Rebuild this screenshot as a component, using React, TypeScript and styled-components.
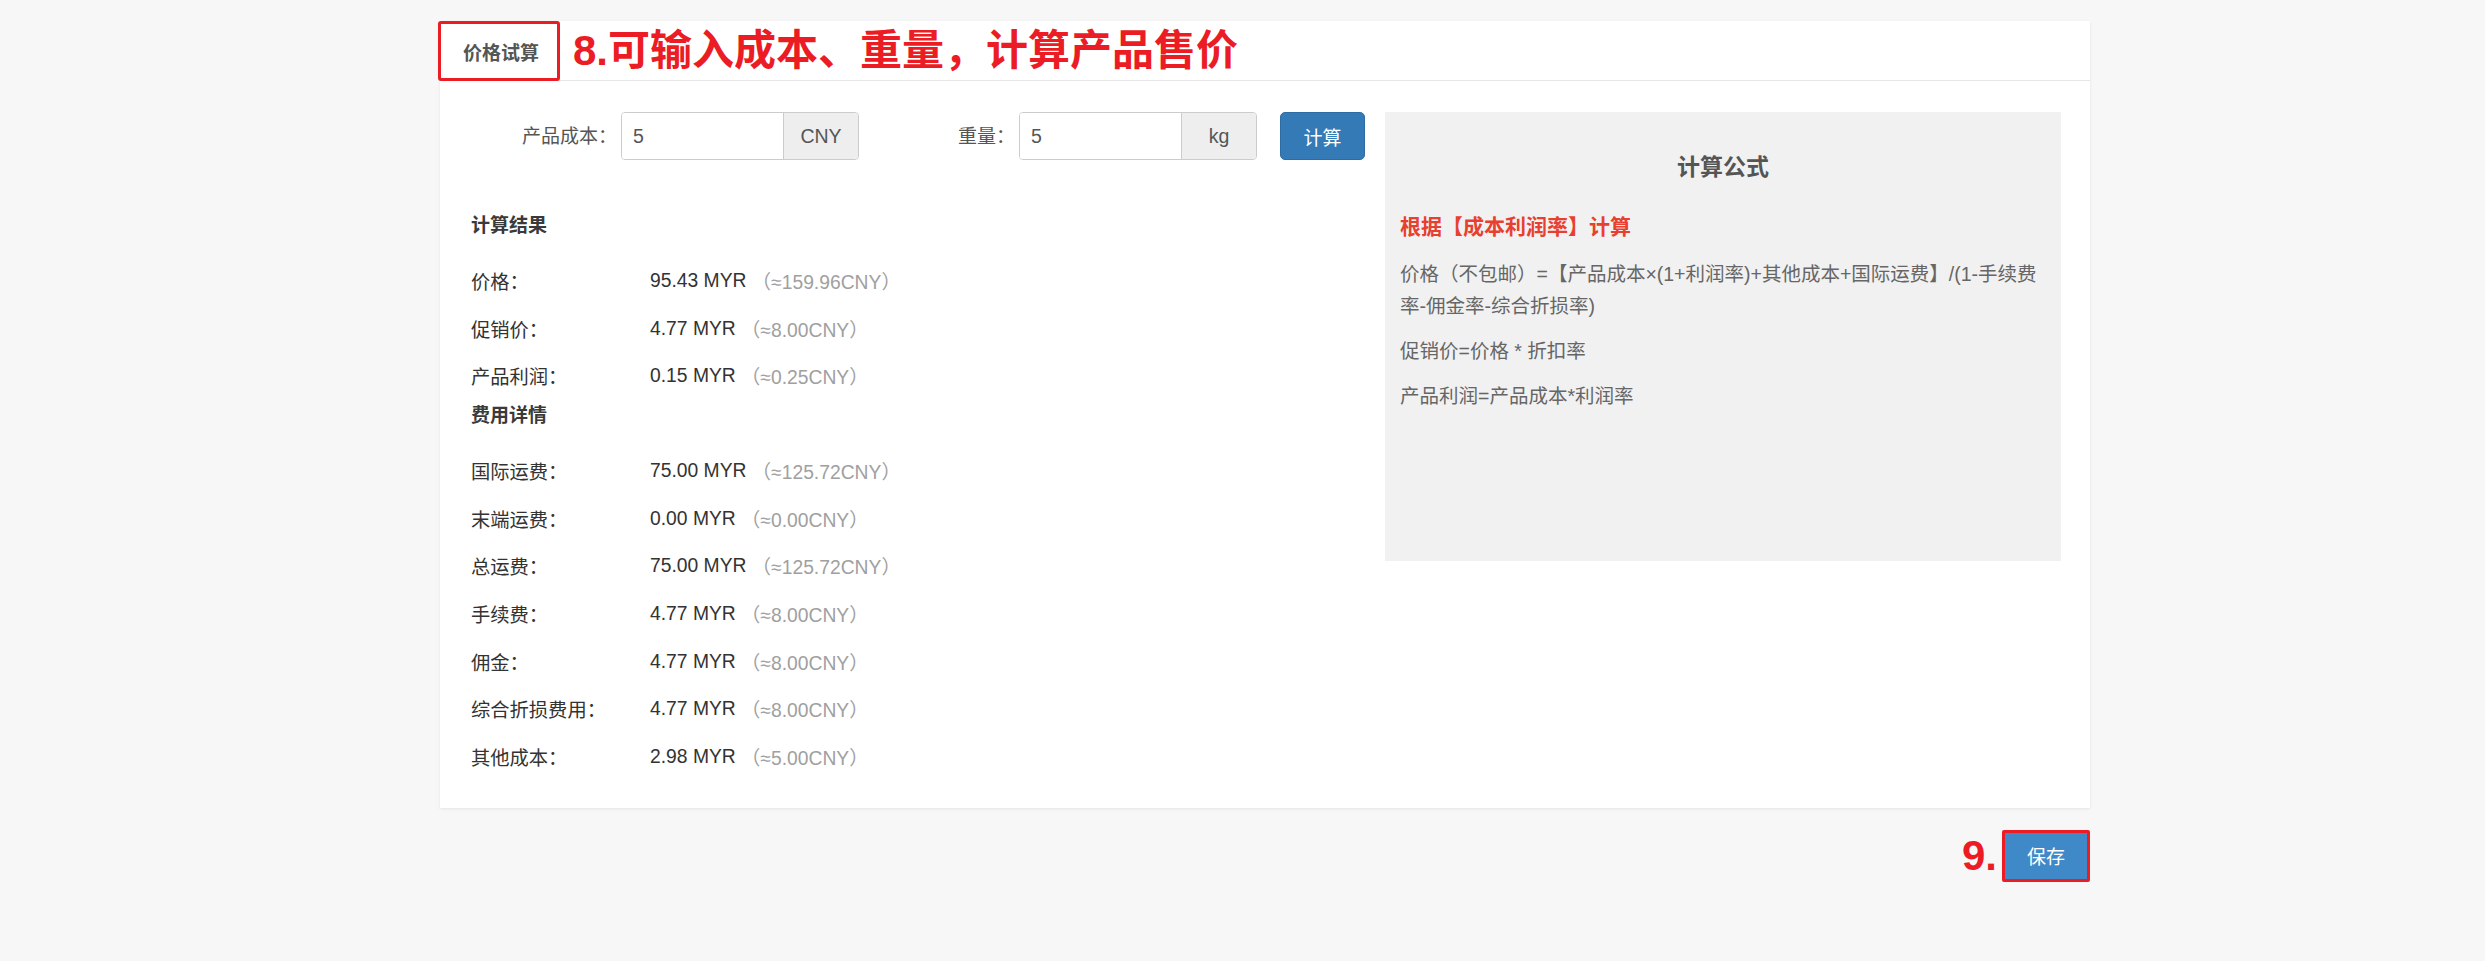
import React from 'react';
import styled, { createGlobalStyle } from 'styled-components';

// ============================================================================
// GLOBAL
// ============================================================================

const GlobalStyle = createGlobalStyle`
  html, body {
    margin: 0;
    padding: 0;
    background: #f7f7f7;
  }
  body {
    font-family: 'Liberation Sans', 'Noto Sans CJK SC', sans-serif;
    color: #333333;
  }
  * {
    box-sizing: border-box;
  }
`;

// ============================================================================
// STYLED COMPONENTS
// ============================================================================

const Page = styled.div`
  width: 2485px;
  min-height: 961px;
  padding: 21px 0 0 440px;
`;

const Panel = styled.section`
  width: 1650px;
  background: #ffffff;
  box-shadow: 0 1px 3px rgba(0, 0, 0, 0.08);
`;

const PanelHeader = styled.header`
  height: 60px;
  display: flex;
  align-items: flex-start;
  border-bottom: 1px solid #e6e6e6;
`;

const TitleBox = styled.div`
  height: 60px;
  margin-left: -2px;
  padding: 0 18px 0 22px;
  display: flex;
  align-items: center;
  border: 3px solid #ec1c24;
  border-radius: 3px;
  font-size: 19px;
  font-weight: 700;
  color: #555555;
  white-space: nowrap;
`;

const Note = styled.span`
  font-size: 42px;
  font-weight: 700;
  color: #ec1c24;
  line-height: 60px;
  white-space: nowrap;
`;

const HeaderNote = styled(Note)`
  margin-left: 13px;
`;

const PanelBody = styled.div`
  display: flex;
  align-items: flex-start;
  gap: 19px;
  padding: 31px 29px 27px 31px;
`;

const LeftColumn = styled.div`
  flex: 1;
`;

const InputRow = styled.div`
  display: flex;
  align-items: center;
  height: 48px;
`;

const Field = styled.div`
  display: flex;
  align-items: center;
  & + & {
    margin-left: 10px;
  }
`;

const FieldLabel = styled.label`
  width: 146px;
  margin-right: 4px;
  margin-top: -3px;
  text-align: right;
  font-size: 19px;
  color: #555555;
  white-space: nowrap;
`;

const InputGroup = styled.div`
  width: 238px;
  height: 48px;
  display: flex;
  border: 1px solid #cccccc;
  border-radius: 4px;
  overflow: hidden;
`;

const TextInput = styled.input`
  flex: 1;
  min-width: 0;
  border: none;
  outline: none;
  padding: 0 11px;
  font-family: inherit;
  font-size: 19.5px;
  color: #555555;
  background: #ffffff;
`;

const Addon = styled.span`
  width: 75px;
  display: flex;
  align-items: center;
  justify-content: center;
  background: #eeeeee;
  border-left: 1px solid #cccccc;
  font-size: 19.5px;
  color: #555555;
`;

const Button = styled.button`
  height: 48px;
  padding: 0 21px;
  border: 1px solid #2e6da4;
  border-radius: 5px;
  background: #337ab7;
  color: #ffffff;
  font-family: inherit;
  font-size: 19px;
  cursor: pointer;
`;

const CalcButton = styled(Button)`
  margin-left: 23px;
  width: 85px;
`;

const SectionTitle = styled.h3<{ $first?: boolean }>`
  margin: ${p => (p.$first ? '50px' : '0')} 0 15px;
  height: 32px;
  line-height: 32px;
  font-size: 19px;
  font-weight: 700;
  color: #3a3a3a;
`;

const ResultRow = styled.div`
  display: flex;
  align-items: center;
  height: 47.7px;
  font-size: 19.3px;
`;

const ResultLabel = styled.span`
  width: 179px;
  color: #333333;
`;

const ResultValue = styled.span`
  color: #333333;
  white-space: pre;
`;

const Approx = styled.span`
  color: #a0a0a0;
  white-space: pre;
`;

const FormulaBox = styled.aside`
  width: 676px;
  height: 449px;
  padding: 0 15px;
  background: #f1f1f1;
`;

const FormulaTitle = styled.h3`
  margin: 38px 0 0;
  line-height: 34px;
  text-align: center;
  font-size: 23px;
  font-weight: 700;
  color: #555555;
`;

const FormulaSubtitle = styled.h4`
  margin: 28px 0 0;
  line-height: 30px;
  font-size: 21px;
  font-weight: 700;
  color: #e8402f;
`;

const FormulaText = styled.p<{ $gap: number }>`
  margin: ${p => p.$gap}px 0 0;
  line-height: 32px;
  font-size: 19.5px;
  color: #666666;
`;

const Footer = styled.div`
  width: 1650px;
  margin-top: 22px;
  display: flex;
  justify-content: flex-end;
  align-items: center;
`;

const FooterNote = styled(Note)`
  line-height: 52px;
  margin-right: 5px;
`;

const SaveFrame = styled.div`
  width: 88px;
  height: 52px;
  border: 3px solid #ec1c24;
  border-radius: 2px;
  display: flex;
`;

const SaveButton = styled(Button)`
  flex: 1;
  height: 100%;
  padding: 0;
  border: none;
  border-radius: 0;
  background: #3f89c9;
`;

// ============================================================================
// DATA
// ============================================================================

type Row = { label: string; myr: string; cny: string };

const results: Row[] = [
  { label: '价格：', myr: '95.43 MYR', cny: '159.96CNY' },
  { label: '促销价：', myr: '4.77 MYR', cny: '8.00CNY' },
  { label: '产品利润：', myr: '0.15 MYR', cny: '0.25CNY' },
];

const fees: Row[] = [
  { label: '国际运费：', myr: '75.00 MYR', cny: '125.72CNY' },
  { label: '末端运费：', myr: '0.00 MYR', cny: '0.00CNY' },
  { label: '总运费：', myr: '75.00 MYR', cny: '125.72CNY' },
  { label: '手续费：', myr: '4.77 MYR', cny: '8.00CNY' },
  { label: '佣金：', myr: '4.77 MYR', cny: '8.00CNY' },
  { label: '综合折损费用：', myr: '4.77 MYR', cny: '8.00CNY' },
  { label: '其他成本：', myr: '2.98 MYR', cny: '5.00CNY' },
];

const renderRow = (r: Row) => (
  <ResultRow key={r.label}>
    <ResultLabel>{r.label}</ResultLabel>
    <ResultValue>{r.myr} </ResultValue>
    <Approx>（≈{r.cny}）</Approx>
  </ResultRow>
);

// ============================================================================
// COMPONENT
// ============================================================================

const App: React.FC = () => {
  return (
    <Page>
      <GlobalStyle />
      <Panel>
        <PanelHeader>
          <TitleBox>价格试算</TitleBox>
          <HeaderNote>8.可输入成本、重量，计算产品售价</HeaderNote>
        </PanelHeader>

        <PanelBody>
          <LeftColumn>
            <InputRow>
              <Field>
                <FieldLabel>产品成本：</FieldLabel>
                <InputGroup>
                  <TextInput defaultValue="5" />
                  <Addon>CNY</Addon>
                </InputGroup>
              </Field>
              <Field>
                <FieldLabel>重量：</FieldLabel>
                <InputGroup>
                  <TextInput defaultValue="5" />
                  <Addon>kg</Addon>
                </InputGroup>
              </Field>
              <CalcButton>计算</CalcButton>
            </InputRow>

            <SectionTitle $first>计算结果</SectionTitle>
            {results.map(renderRow)}

            <SectionTitle>费用详情</SectionTitle>
            {fees.map(renderRow)}
          </LeftColumn>

          <FormulaBox>
            <FormulaTitle>计算公式</FormulaTitle>
            <FormulaSubtitle>根据【成本利润率】计算</FormulaSubtitle>
            <FormulaText $gap={16}>
              价格（不包邮）=【产品成本×(1+利润率)+其他成本+国际运费】/(1-手续费率-佣金率-综合折损率)
            </FormulaText>
            <FormulaText $gap={13}>促销价=价格 * 折扣率</FormulaText>
            <FormulaText $gap={13}>产品利润=产品成本*利润率</FormulaText>
          </FormulaBox>
        </PanelBody>
      </Panel>

      <Footer>
        <FooterNote>9.</FooterNote>
        <SaveFrame>
          <SaveButton>保存</SaveButton>
        </SaveFrame>
      </Footer>
    </Page>
  );
};

export default App;
